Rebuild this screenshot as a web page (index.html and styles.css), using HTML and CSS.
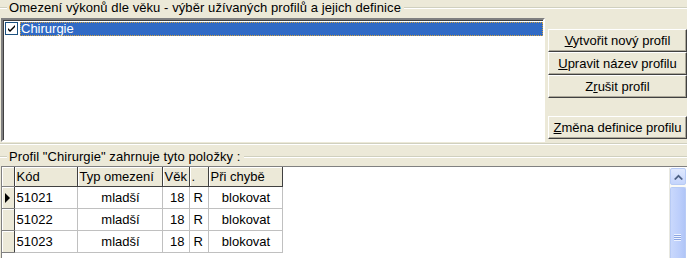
FILE: index.html
```html
<!DOCTYPE html>
<html>
<head>
<meta charset="utf-8">
<link rel="stylesheet" href="styles.css">
</head>
<body>
<div class="app">
  <div class="group-title top-title">
    <span class="line-left"></span>
    <span class="title-text">Omezení výkonů dle věku - výběr užívaných profilů a jejich definice</span>
    <span class="line-right"></span>
  </div>
  <div class="top-body">
    <div class="listbox">
      <div class="item">
        <span class="chk"><svg width="13" height="13" viewBox="0 0 13 13"><rect x="0.5" y="0.5" width="12" height="12" fill="#fff" stroke="#1c5180"/><path d="M3 6 L5 8 L10 3 L10 5 L5 10 L3 8 Z" fill="#000"/></svg></span>
        <span class="label">Chirurgie</span>
      </div>
    </div>
    <div class="buttons">
      <button class="btn"><u>V</u>ytvořit nový profil</button>
      <button class="btn"><u>U</u>pravit název profilu</button>
      <button class="btn">Z<u>r</u>ušit profil</button>
      <div class="spacer"></div>
      <button class="btn"><u>Z</u>měna definice profilu</button>
    </div>
  </div>
  <div class="group-bottom-edge"></div>
  <div class="group-title bottom-title">
    <span class="line-left"></span>
    <span class="title-text">Profil "Chirurgie" zahrnuje tyto položky :</span>
    <span class="line-right"></span>
  </div>
  <div class="grid-box">
    <table class="grid">
      <colgroup>
        <col class="c-sel"><col class="c-kod"><col class="c-typ"><col class="c-vek"><col class="c-dot"><col class="c-pri">
      </colgroup>
      <thead>
        <tr><th class="sel"></th><th>Kód</th><th>Typ omezení</th><th>Věk</th><th>.</th><th>Při chybě</th></tr>
      </thead>
      <tbody>
        <tr><td class="sel"><span class="ptr"></span></td><td>51021</td><td class="center">mladší</td><td class="right">18</td><td class="dot">R</td><td class="center">blokovat</td></tr>
        <tr><td class="sel"></td><td>51022</td><td class="center">mladší</td><td class="right">18</td><td class="dot">R</td><td class="center">blokovat</td></tr>
        <tr><td class="sel"></td><td>51023</td><td class="center">mladší</td><td class="right">18</td><td class="dot">R</td><td class="center">blokovat</td></tr>
      </tbody>
    </table>
    <div class="vscroll">
      <div class="sb-btn"><svg width="9" height="6" viewBox="0 0 9 6"><path d="M0 5 L4.5 0.5 L9 5 L7.5 6 L4.5 3 L1.5 6 Z" fill="#4d6185"/></svg></div>
      <div class="sb-thumb"><span class="grip"></span></div>
    </div>
  </div>
</div>
</body>
</html>
```
FILE: styles.css
```css
html, body {
  margin: 0;
  padding: 0;
  background: #ece9d8;
  overflow: hidden;
}
body {
  width: 687px;
  height: 258px;
  font-family: "Liberation Sans", Arial, sans-serif;
  font-size: 13px;
  color: #000;
}
.app {
  display: flex;
  flex-direction: column;
}
.group-title {
  display: flex;
  align-items: center;
  height: 15px;
}
.line-left {
  width: 7px;
  height: 1px;
  background: #d0d0bf;
  border-bottom: 1px solid #fff;
}
.line-right {
  flex: 1;
  height: 1px;
  background: #d0d0bf;
  border-bottom: 1px solid #fff;
}
.title-text {
  padding: 0 3px 0 2px;
  line-height: 15px;
  white-space: nowrap;
  letter-spacing: 0.08px;
}
.top-body {
  display: flex;
  margin-top: 3px;
  height: 124px;
}
.listbox {
  margin-left: 1px;
  width: 540px;
  height: 120px;
  background: #fff;
  border-top: 2px solid #808080;
  border-left: 2px solid #808080;
  border-right: 2px solid #fff;
  border-bottom: 2px solid #fff;
  box-shadow: inset 1px 1px 0 #404040;
}
.item {
  display: flex;
  align-items: center;
  height: 15px;
  margin-top: 1px;
}
.chk {
  width: 13px;
  height: 13px;
  margin: 0 2px 0 2px;
  display: flex;
}
.label {
  flex: 1;
  height: 14px;
  line-height: 14px;
  background: #316ac5;
  color: #fff;
  padding-left: 1px;
  outline: 1px dotted #d0a040;
  outline-offset: -1px;
}
.buttons {
  display: flex;
  flex-direction: column;
  margin-left: 3px;
  padding-top: 11px;
  width: 139px;
}
.btn {
  height: 23px;
  width: 139px;
  margin: 0;
  padding: 0;
  font-family: inherit;
  font-size: 13px;
  color: #000;
  background: #ece9d8;
  border: 1px solid;
  border-color: #fff #404040 #404040 #fff;
  box-shadow: inset -1px -1px 0 #aca899;
  text-align: center;
  line-height: 20px;
}
.spacer {
  height: 18px;
}
.group-bottom-edge {
  height: 1px;
  margin-top: 1px;
  background: #d0d0bf;
  border-bottom: 1px solid #fff;
}
.bottom-title {
  margin-top: 4px;
}
.grid-box {
  margin-top: 2px;
  margin-left: 1px;
  height: 92px;
  background: #fff;
  border-top: 1px solid #808080;
  border-left: 1px solid #808080;
  position: relative;
  display: flex;
}
.grid {
  border-collapse: collapse;
  table-layout: fixed;
  width: 280px;
  height: 86px;
  font-size: 13px;
}
.c-sel { width: 12px; }
.c-kod { width: 63px; }
.c-typ { width: 85px; }
.c-vek { width: 27px; }
.c-dot { width: 19px; }
.c-pri { width: 74px; }
.grid th {
  background: #ece9d8;
  font-weight: normal;
  text-align: left;
  height: 19px;
  padding: 0 0 0 2px;
  border-right: 1px solid #404040;
  border-bottom: 1px solid #404040;
  box-shadow: inset 1px 1px 0 #fff;
  white-space: nowrap;
  overflow: hidden;
}
.grid td {
  height: 21px;
  padding: 0 0 0 2px;
  border-right: 1px solid #c0c0c0;
  border-bottom: 1px solid #c0c0c0;
  white-space: nowrap;
}
.grid td.sel, .grid th.sel {
  background: #ece9d8;
  border-right: 1px solid #404040;
  border-bottom: 1px solid #808080;
  box-shadow: inset 1px 1px 0 #fff;
  padding: 0;
}
.ptr {
  display: block;
  width: 0;
  height: 0;
  margin-left: 3px;
  border-top: 5px solid transparent;
  border-bottom: 5px solid transparent;
  border-left: 5px solid #000;
}
.center { text-align: center; }
.right { text-align: right; padding-right: 4px !important; }
.dot { padding-left: 4px !important; }
.vscroll {
  position: absolute;
  right: 1px;
  top: 1px;
  bottom: 0;
  width: 16px;
  background: #fafaf6;
  border-left: 1px solid #e8e8e0;
  display: flex;
  flex-direction: column;
  align-items: center;
}
.sb-btn {
  width: 14px;
  height: 15px;
  border: 1px solid #b8cbf5;
  border-radius: 2px;
  background: linear-gradient(#e0e9fe, #c4d4fc);
  display: flex;
  align-items: center;
  justify-content: center;
}
.sb-thumb {
  margin-top: 2px;
  width: 14px;
  flex: 1;
  border: 1px solid #b8cbf5;
  border-bottom: none;
  border-radius: 2px 2px 0 0;
  background: linear-gradient(90deg, #c9d8fc, #bccefb 60%, #b0c5f7);
  position: relative;
}
.grip {
  position: absolute;
  left: 3px;
  top: 46px;
  width: 7px;
  height: 7px;
  background: repeating-linear-gradient(#eef3fe 0 1px, #8ca6e3 1px 2px);
}
```
